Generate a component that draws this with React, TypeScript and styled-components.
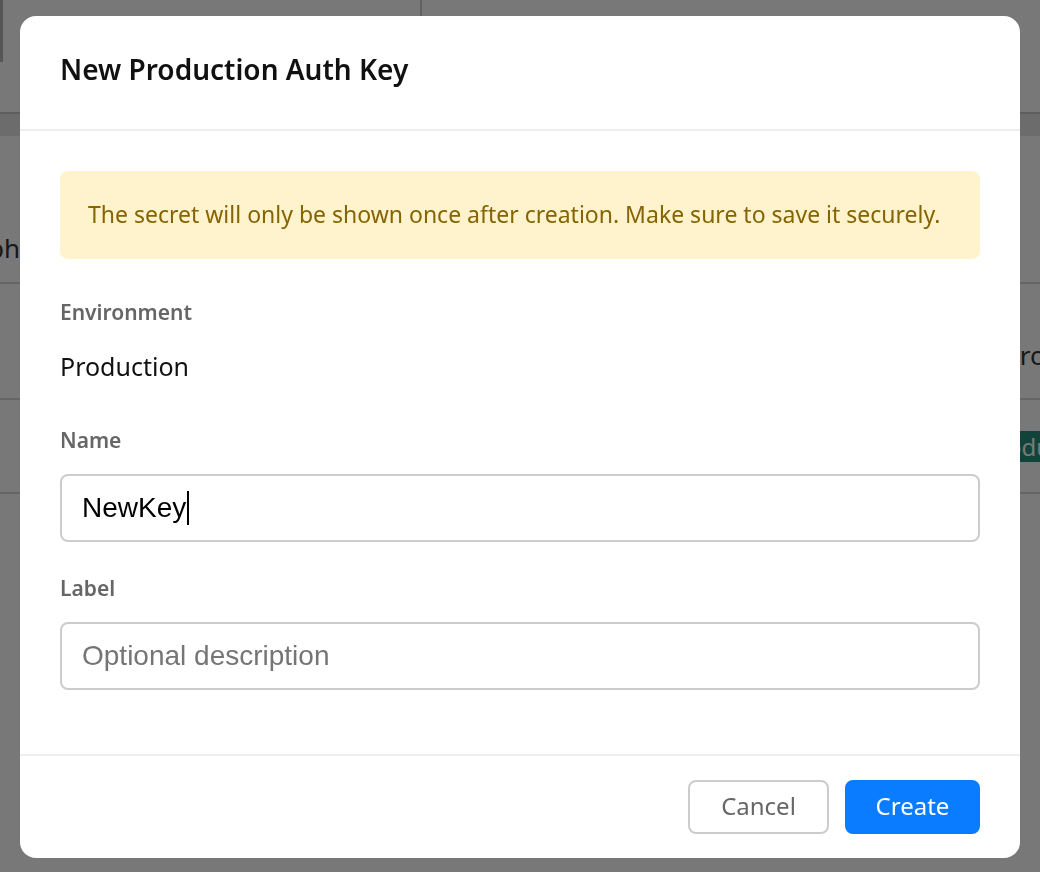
import React from "react";
import styled, { createGlobalStyle } from "styled-components";

const Global = createGlobalStyle`
  html, body { margin: 0; padding: 0; background: #ffffff; }
  body { font-family: "Noto Sans", "Open Sans", sans-serif; overflow: hidden; }
  * { box-sizing: border-box; }
`;

/* ---------- background page (dimmed) ---------- */
const Page = styled.div`
  width: 1040px;
  height: 872px;
  display: flex;
  flex-direction: column;
  background: #fff;
  color: #333;
`;

const TopBar = styled.div`
  height: 112px;
  display: grid;
  grid-template-columns: 3px 417px 1fr;
`;

const SideRule = styled.div`
  border-left: 3px solid #b8b8b8;
  height: 62px;
`;

const TopRule = styled.div`
  grid-column: 3;
  border-left: 2px solid #cfcfcf;
  height: 62px;
`;

const TableHead = styled.div`
  height: 24px;
  border-top: 2px solid #c8c8c8;
  background: #e6e6e6;
`;

const Row = styled.div<{ $h: number }>`
  height: ${(p) => p.$h}px;
  border-bottom: 2px solid #d6d6d6;
  display: flex;
  align-items: center;
  justify-content: space-between;
  font-size: 26px;
`;

const LeftCell = styled.div`
  width: 20px;
  display: flex;
  justify-content: flex-end;
  white-space: nowrap;
  padding-top: 78px;
`;

const RightCell = styled.div<{ $drop?: number }>`
  width: 36px;
  white-space: nowrap;
  overflow: hidden;
  padding-top: ${(p) => p.$drop ?? 0}px;
`;

const Tag = styled.span`
  display: inline-block;
  background: #238f7a;
  color: #ffffff;
  font-size: 24px;
  line-height: 31px;
  padding: 0 8px;
  margin-left: -29px;
`;

/* ---------- overlay + modal ---------- */
const Overlay = styled.div`
  position: fixed;
  inset: 0;
  padding-top: 2px;
  background: rgba(0, 0, 0, 0.53);
  display: flex;
  align-items: center;
  justify-content: center;
`;

const Modal = styled.div`
  width: 1000px;
  height: 842px;
  background: #fff;
  border-radius: 16px;
  display: flex;
  flex-direction: column;
  overflow: hidden;
`;

const Header = styled.div`
  padding: 35px 40px 42px;
  border-bottom: 2px solid #eeeeee;
`;

const Title = styled.h2`
  margin: 0;
  font-size: 28px;
  line-height: 36px;
  font-weight: 600;
  color: #111;
`;

const Body = styled.div`
  flex: 1;
  padding: 40px 40px 0;
  display: flex;
  flex-direction: column;
`;

const Alert = styled.div`
  background: #fff3cd;
  color: #856404;
  border-radius: 8px;
  height: 88px;
  padding: 0 28px 2px;
  display: flex;
  align-items: center;
  font-size: 23px;
  margin-bottom: 39px;
`;

const Group = styled.div`
  display: flex;
  flex-direction: column;
  margin-bottom: 32px;
`;

const Label = styled.div`
  font-size: 21px;
  line-height: 28px;
  font-weight: 600;
  color: #666;
  margin-bottom: 20px;
`;

const Value = styled.div`
  font-size: 25px;
  line-height: 34px;
  color: #111;
  margin-top: 3px;
  padding-bottom: 11px;
`;

const Field = styled.div<{ $placeholder?: boolean }>`
  height: 68px;
  border: 2px solid #cccccc;
  border-radius: 8px;
  padding: 0 20px;
  display: flex;
  align-items: center;
  font-family: "Liberation Sans", Arial, sans-serif;
  font-size: 28px;
  color: ${(p) => (p.$placeholder ? "#757575" : "#000")};
`;

const Caret = styled.span`
  display: inline-block;
  width: 2px;
  height: 34px;
  background: #000;
  margin-left: 1px;
`;

const Footer = styled.div`
  border-top: 2px solid #eeeeee;
  padding: 24px 40px 24px;
  display: flex;
  justify-content: flex-end;
  gap: 16px;
`;

const Button = styled.button<{ $primary?: boolean }>`
  height: 54px;
  border-radius: 8px;
  font-family: "Noto Sans", sans-serif;
  font-size: 24px;
  padding: 0 0 3px;
  width: ${(p) => (p.$primary ? 135 : 141)}px;
  border: 2px solid ${(p) => (p.$primary ? "#0a7cff" : "#cccccc")};
  background: ${(p) => (p.$primary ? "#0a7cff" : "#ffffff")};
  color: ${(p) => (p.$primary ? "#ffffff" : "#666666")};
  cursor: pointer;
`;

export default function App() {
  return (
    <>
      <Global />
      <Page>
        <TopBar>
          <SideRule />
          <div />
          <TopRule />
        </TopBar>
        <TableHead />
        <Row $h={148}>
          <LeftCell>Graph</LeftCell>
        </Row>
        <Row $h={116}>
          <div />
          <RightCell $drop={28}>Production</RightCell>
        </Row>
        <Row $h={94}>
          <div />
          <RightCell>
            <Tag>Production</Tag>
          </RightCell>
        </Row>
      </Page>
      <Overlay>
        <Modal>
          <Header>
            <Title>New Production Auth Key</Title>
          </Header>
          <Body>
            <Alert>
              The secret will only be shown once after creation. Make sure to save it securely.
            </Alert>
            <Group>
              <Label>Environment</Label>
              <Value>Production</Value>
            </Group>
            <Group>
              <Label>Name</Label>
              <Field>
                NewKey
                <Caret />
              </Field>
            </Group>
            <Group>
              <Label>Label</Label>
              <Field $placeholder>Optional description</Field>
            </Group>
          </Body>
          <Footer>
            <Button>Cancel</Button>
            <Button $primary>Create</Button>
          </Footer>
        </Modal>
      </Overlay>
    </>
  );
}
